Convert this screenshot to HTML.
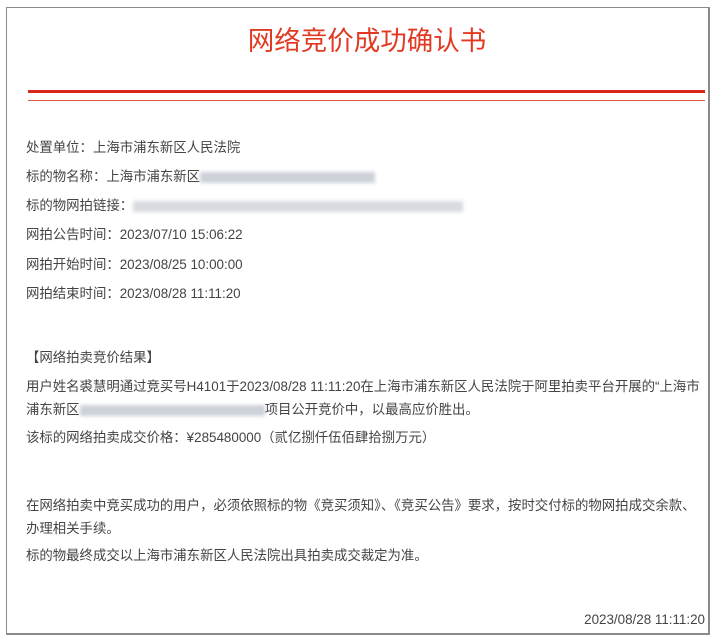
<!DOCTYPE html>
<html><head><meta charset="utf-8"><style>
html,body{margin:0;padding:0;background:#fff;}
body{width:720px;height:642px;position:relative;overflow:hidden;font-family:"Liberation Sans","Noto Sans CJK SC",sans-serif;color:#444;font-size:13.4px;}
.box{position:absolute;left:6px;top:7px;width:701px;height:625px;border:1px solid #8a8a8a;border-right-width:2px;border-bottom-width:2px;}
.t{position:absolute;left:200px;top:24px;width:334px;text-align:center;font-size:26.5px;color:#e23a22;white-space:nowrap;line-height:34px;}
.r1{position:absolute;left:28px;width:677px;top:90px;height:3px;background:#d9261a;}
.r2{position:absolute;left:28px;width:677px;top:100px;height:1px;background:#e3574a;}
.l{position:absolute;left:26px;white-space:nowrap;line-height:16px;}
.b{display:inline-block;height:11px;background:#cdd1d8;filter:blur(1.8px);vertical-align:middle;}
</style></head><body>
<div class="box"></div>
<div class="t">网络竞价成功确认书</div>
<div class="r1"></div><div class="r2"></div>
<div class="l" style="top:140px">处置单位：上海市浦东新区人民法院</div>
<div class="l" style="top:169px">标的物名称：上海市浦东新区<span class="b" style="width:175px"></span></div>
<div class="l" style="top:198px">标的物网拍链接：<span class="b" style="width:330px;background:#d8dbe0"></span></div>
<div class="l" style="top:227px">网拍公告时间：2023/07/10 15:06:22</div>
<div class="l" style="top:257px">网拍开始时间：2023/08/25 10:00:00</div>
<div class="l" style="top:286px">网拍结束时间：2023/08/28 11:11:20</div>
<div class="l" style="top:350px">【网络拍卖竞价结果】</div>
<div class="l" style="top:379px">用户姓名裘慧明通过竞买号H4101于2023/08/28 11:11:20在上海市浦东新区人民法院于阿里拍卖平台开展的“上海市</div>
<div class="l" style="top:402px">浦东新区<span class="b" style="width:185px"></span>项目公开竞价中，以最高应价胜出。</div>
<div class="l" style="top:430px">该标的网络拍卖成交价格：¥285480000（贰亿捌仟伍佰肆拾捌万元）</div>
<div class="l" style="top:498px">在网络拍卖中竞买成功的用户，必须依照标的物《竞买须知》、《竞买公告》要求，按时交付标的物网拍成交余款、</div>
<div class="l" style="top:521px">办理相关手续。</div>
<div class="l" style="top:548px">标的物最终成交以上海市浦东新区人民法院出具拍卖成交裁定为准。</div>
<div class="l" style="top:612px;left:auto;right:15px">2023/08/28 11:11:20</div>
</body></html>
